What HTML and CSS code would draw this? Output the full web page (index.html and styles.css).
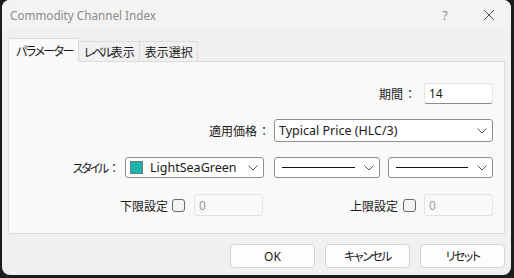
FILE: index.html
```html
<!DOCTYPE html>
<html lang="ja">
<head>
<meta charset="utf-8">
<title>Commodity Channel Index</title>
<link rel="stylesheet" href="styles.css">
</head>
<body>
<div class="window">
  <div class="titlebar">
    <span class="title">Commodity Channel Index</span>
    <span class="help">?</span>
    <span class="close">
      <svg width="12" height="12" viewBox="0 0 12 12"><path d="M1 1 L11 11 M11 1 L1 11" stroke="#555" stroke-width="1" fill="none"/></svg>
    </span>
  </div>
  <div class="tabs">
    <div class="tab active"><span class="kana">パラメーター</span></div>
    <div class="tab"><span class="kana k3">レベル</span>表示</div>
    <div class="tab">表示選択</div>
  </div>
  <div class="panel">
    <div class="row row1">
      <span class="label">期間<span class="colon">：</span></span>
      <div class="input w-num">14</div>
    </div>
    <div class="row row2">
      <span class="label">適用価格<span class="colon">：</span></span>
      <div class="select w-price"><span class="val">Typical Price (HLC/3)</span><span class="chev"><svg width="10" height="6" viewBox="0 0 10 6"><path d="M0.5 0.5 L5 5 L9.5 0.5" stroke="#555" fill="none"/></svg></span></div>
    </div>
    <div class="row row3">
      <span class="label"><span class="kana k2">スタイル</span><span class="colon">：</span></span>
      <div class="select w-color"><span class="swatch"></span><span class="val">LightSeaGreen</span><span class="chev"><svg width="10" height="6" viewBox="0 0 10 6"><path d="M0.5 0.5 L5 5 L9.5 0.5" stroke="#555" fill="none"/></svg></span></div>
      <div class="select w-line"><span class="line"></span><span class="chev"><svg width="10" height="6" viewBox="0 0 10 6"><path d="M0.5 0.5 L5 5 L9.5 0.5" stroke="#555" fill="none"/></svg></span></div>
      <div class="select w-line2"><span class="line"></span><span class="chev"><svg width="10" height="6" viewBox="0 0 10 6"><path d="M0.5 0.5 L5 5 L9.5 0.5" stroke="#555" fill="none"/></svg></span></div>
    </div>
    <div class="row row4">
      <div class="group g-low">
        <span class="label">下限設定</span>
        <span class="check"></span>
        <div class="input disabled w-lim">0</div>
      </div>
      <div class="group g-high">
        <span class="label">上限設定</span>
        <span class="check"></span>
        <div class="input disabled w-lim">0</div>
      </div>
    </div>
  </div>
  <div class="buttons">
    <div class="btn">OK</div>
    <div class="btn"><span class="kana">キャンセル</span></div>
    <div class="btn"><span class="kana">リセット</span></div>
  </div>
</div>
</body>
</html>
```
FILE: styles.css
```css
* { box-sizing: border-box; }
html, body { margin: 0; padding: 0; }
body {
  background: #1c1c1c;
  width: 514px;
  height: 278px;
  overflow: hidden;
  font-family: "Noto Sans", "Noto Sans CJK JP", sans-serif;
  font-size: 12px;
  color: #1a1a1a;
}
.kana {
  font-feature-settings: "palt";
  letter-spacing: -1.5px;
}
.kana.k2 { letter-spacing: -2.2px; }
.kana.k3 { letter-spacing: -2.4px; }
.colon {
  font-feature-settings: normal;
  letter-spacing: 0;
  margin-left: 1px;
}
.window {
  margin-left: 2px;
  width: 509px;
  height: 275px;
  background: #f0f0f0;
  border-radius: 8px;
  overflow: hidden;
  display: flex;
  flex-direction: column;
}
.titlebar {
  height: 30px;
  background: #f3f3f3;
  display: flex;
  align-items: center;
  padding-left: 8px;
  flex-shrink: 0;
}
.title {
  color: #8a8a8a;
  font-size: 11.7px;
  flex: 1;
}
.help {
  color: #8a8a8a;
  font-size: 12px;
  width: 44px;
  text-align: center;
}
.close {
  width: 44px;
  display: flex;
  justify-content: center;
  align-items: center;
}
.tabs {
  display: flex;
  align-items: flex-end;
  margin-left: 6px;
  margin-top: 8px;
  height: 23px;
  position: relative;
  z-index: 1;
}
.tab {
  height: 20px;
  padding: 0 4px 0 5px;
  border: 1px solid #dcdcdc;
  border-bottom: none;
  background: #f0f0f0;
  display: flex;
  align-items: center;
  font-family: "Noto Sans CJK JP", sans-serif;
  font-size: 12px;
  margin-left: -1px;
}
.tab.active {
  background: #f9f9f9;
  padding: 0 5px 0 7px;
  margin-left: 0;
  margin-bottom: -1px;
  height: 24px;
}
.panel {
  margin: 0 6px;
  height: 173px;
  background: #f9f9f9;
  border: 1px solid #dcdcdc;
  padding: 21px 11px 0 0;
  display: flex;
  flex-direction: column;
  flex-shrink: 0;
}
.row {
  display: flex;
  align-items: center;
  justify-content: flex-end;
}
.row1 { height: 21px; }
.row2 { height: 23px; margin-top: 15px; }
.row3 { height: 21px; margin-top: 15px; }
.row4 { height: 22px; margin-top: 16px; }
.label {
  font-family: "Noto Sans CJK JP", sans-serif;
  font-size: 12px;
  color: #1a1a1a;
}
.row1 .label { margin-right: 8px; }
.row2 .label { margin-right: 4px; }
.row3 .label { margin-right: 5px; }
.input {
  height: 100%;
  background: #ffffff;
  border: 1px solid #e3e3e3;
  border-bottom: 1px solid #8a8a8a;
  border-radius: 3px;
  padding: 0 4px;
  display: flex;
  align-items: center;
  font-size: 12px;
}
.input.disabled {
  background: #f9f9f9;
  border: 1px solid #e3e3e3;
  color: #9a9a9a;
  align-items: flex-start;
  padding-top: 2px;
}
.w-num { width: 69px; }
.w-lim { width: 69px; height: 22px; }
.select {
  height: 100%;
  background: #ffffff;
  border: 1px solid #8f8f8f;
  border-radius: 3px;
  display: flex;
  align-items: center;
  padding-left: 4px;
  font-size: 12.5px;
}
.select .val { flex: 1; white-space: nowrap; }
.chev {
  width: 20px;
  display: flex;
  justify-content: center;
  align-items: center;
}
.w-price { width: 219px; }
.w-color { width: 139px; margin-right: 10px; }
.w-line { width: 106px; margin-right: 8px; padding-left: 7px; }
.w-line2 { width: 105px; padding-left: 7px; }
.swatch {
  width: 13px;
  height: 13px;
  background: #20b2aa;
  border: 1px solid #5f7f7d;
  margin-right: 7px;
}
.line {
  flex: 1;
  height: 1px;
  background: #111;
  margin-right: 4px;
}
.group {
  display: flex;
  align-items: center;
  height: 100%;
}
.g-low { margin-right: 87px; }
.check {
  width: 13px;
  height: 13px;
  border: 1px solid #6a6a6a;
  border-radius: 3px;
  background: #f4f4f4;
  margin: 0 9px 0 4px;
}
.g-high .check { margin: 0 8px 0 5px; }
.buttons {
  display: flex;
  justify-content: flex-end;
  gap: 10px;
  padding-right: 6px;
  margin-top: 10px;
}
.btn {
  width: 85px;
  height: 24px;
  background: #fdfdfd;
  border: 1px solid #d3d3d3;
  border-radius: 4px;
  display: flex;
  align-items: center;
  justify-content: center;
  font-size: 12px;
  font-family: "Noto Sans", "Noto Sans CJK JP", sans-serif;
}
```
